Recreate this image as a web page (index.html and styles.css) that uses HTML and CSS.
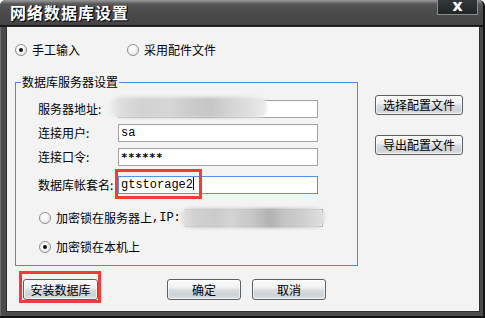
FILE: index.html
```html
<!DOCTYPE html>
<html lang="zh">
<head>
<meta charset="utf-8">
<title>网络数据库设置</title>
<link rel="stylesheet" href="styles.css">
</head>
<body>
<div class="window">
  <div class="titlebar">
    <span class="title">网络数据库设置</span>
    <span class="close">X</span>
  </div>
  <div class="client">
    <div class="mode-row">
      <label class="radio checked"><span class="dot"></span>手工输入</label>
      <label class="radio"><span class="dot"></span>采用配件文件</label>
    </div>
    <div class="main">
      <div class="group">
        <div class="legend">数据库服务器设置</div>
        <div class="field first"><span class="flabel">服务器地址:</span><span class="input"></span></div>
        <div class="field"><span class="flabel">连接用户:</span><span class="input">sa</span></div>
        <div class="field"><span class="flabel">连接口令:</span><span class="input pwd">******</span></div>
        <div class="field gap10"><span class="flabel">数据库帐套名:</span><span class="input focused">gtstorage2<span class="caret"></span></span></div>
        <div class="rfield first-r"><label class="radio"><span class="dot"></span>加密锁在服务器上<span class="mono">,IP:</span></label><span class="input ip"></span></div>
        <div class="rfield second-r"><label class="radio checked"><span class="dot"></span>加密锁在本机上</label></div>
      </div>
      <div class="side">
        <button class="btn side-btn">选择配置文件</button>
        <button class="btn side-btn">导出配置文件</button>
      </div>
    </div>
    <div class="footer">
      <button class="btn install">安装数据库</button>
      <button class="btn ok">确定</button>
      <button class="btn cancel">取消</button>
    </div>
    <div class="blur blur-addr"></div>
    <div class="blur blur-ip"></div>
    <div class="mark mark-name"></div>
    <div class="mark mark-install"></div>
  </div>
</div>
</body>
</html>
```
FILE: styles.css
```css
* { box-sizing: border-box; }
html, body { margin: 0; padding: 0; background: #ffffff; }
body {
  width: 485px;
  height: 318px;
  overflow: hidden;
  font-family: "Noto Sans CJK SC", "Liberation Sans", sans-serif;
  font-size: 12px;
  color: #000;
}
.window {
  width: 485px;
  height: 318px;
  background: #4b4b4b;
  border-right: 2px solid #141414;
  border-bottom: 2px solid #141414;
  border-radius: 6px 6px 0 0;
  box-shadow: inset 1px 0 0 #707070;
  overflow: hidden;
}
.titlebar {
  height: 27px;
  border-bottom: 2px solid #161616;
  background: linear-gradient(#9a9a9a 0px, #7a7a7a 2px, #565656 4px, #4b4b4b 12px, #444444 25px);
  display: flex;
  justify-content: space-between;
  align-items: flex-start;
}
.title {
  padding-left: 10px;
  line-height: 25px;
  font-size: 16px;
  font-weight: 700;
  letter-spacing: 1px;
  color: #ffffff;
  text-shadow: 1px 1px 0 #000, 1px 0 0 #000;
}
.close {
  width: 41px;
  height: 15px;
  margin-right: 5px;
  border: 1px solid #8c8c8c;
  border-top: none;
  background: linear-gradient(#34383a, #222526);
  color: #fff;
  font-family: "DejaVu Sans", sans-serif;
  font-weight: 700;
  font-size: 13px;
  line-height: 13px;
  text-align: center;
  text-shadow: 0 0 1px #ccc;
}
.client {
  position: relative;
  margin-left: 7px;
  width: 472px;
  height: 284px;
  background: #f3f3f3;
  box-shadow: 0 0 0 1px #2e2e2e;
}
.radio {
  display: flex;
  align-items: center;
  gap: 5px;
  line-height: 14px;
  white-space: nowrap;
}
.mono {
  font-family: "Liberation Mono", monospace;
  margin-left: -5px;
}
.dot {
  width: 12px;
  height: 12px;
  border-radius: 50%;
  border: 1px solid #8f8f8f;
  background: radial-gradient(circle at 40% 40%, #ffffff 0%, #f4f4f4 45%, #d8d8d8 100%);
  display: flex;
  align-items: center;
  justify-content: center;
}
.radio.checked .dot::after {
  content: "";
  width: 4px;
  height: 4px;
  border-radius: 50%;
  background: #111;
}
.mode-row {
  display: flex;
  gap: 47px;
  padding-top: 16px;
  padding-left: 8px;
  height: 30px;
}
.main {
  display: flex;
  margin-top: 25px;
  margin-left: 8px;
}
.group {
  width: 343px;
  height: 184px;
  border: 1px solid #3f8fe2;
  padding-left: 22px;
}
.legend {
  display: table;
  margin-top: -8px;
  margin-left: -17px;
  padding: 0 1px;
  line-height: 14px;
  background: #f3f3f3;
}
.field {
  display: flex;
  align-items: center;
  height: 18px;
  margin-top: 6px;
}
.field.first { margin-top: 11px; }
.field.gap10 { margin-top: 10px; }
.flabel {
  width: 80px;
  line-height: 14px;
  white-space: nowrap;
}
.input {
  position: relative;
  width: 200px;
  height: 18px;
  border: 1px solid #a3a3a3;
  background: #ffffff;
  padding-left: 2px;
  font-family: "Liberation Mono", "DejaVu Sans Mono", monospace;
  font-size: 12px;
  line-height: 16px;
}
.input.pwd {
  font-family: "DejaVu Sans Mono", monospace;
  font-weight: 700;
  font-size: 11px;
  letter-spacing: 0.4px;
  line-height: 18px;
}
.input.focused { border-color: #4f97e0; }
.caret {
  display: inline-block;
  width: 1px;
  height: 13px;
  background: #000;
  vertical-align: -2px;
}
.rfield {
  display: flex;
  align-items: center;
  height: 18px;
  margin-left: 1px;
}
.rfield.first-r { margin-top: 15px; }
.rfield.second-r { margin-top: 11px; }
.input.ip {
  width: 138px;
  margin-left: 4px;
}
.side {
  display: flex;
  flex-direction: column;
  gap: 20px;
  margin-left: 17px;
  margin-top: 13px;
}
.btn {
  font-family: "Noto Sans CJK SC", "Liberation Sans", sans-serif;
  font-size: 12px;
  color: #000;
  padding: 0;
  line-height: 14px;
  border: 1px solid #5c6165;
  border-radius: 3px;
  background: linear-gradient(#fbfbfb 0%, #f0f1f2 40%, #d9dde0 52%, #cdd2d6 80%, #dfe2e5 100%);
  box-shadow: inset 0 0 0 1px rgba(255,255,255,0.6);
}
.side-btn { width: 88px; height: 20px; }
.footer {
  display: flex;
  margin-top: 13px;
  padding-left: 16px;
}
.footer .btn { height: 21px; }
.install { width: 75px; }
.ok { width: 74px; margin-left: 69px; }
.cancel { width: 74px; margin-left: 11px; }
.blur {
  position: absolute;
  filter: blur(1.5px);
  border-radius: 9px;
}
.blur-addr {
  left: 103px;
  top: 70px;
  width: 157px;
  height: 21px;
  background: linear-gradient(90deg, #ececec 0%, #dcdcdc 8%, #d2d2d2 20%, #d6d6d6 38%, #cbcbcb 52%, #c6c6c6 64%, #d4d4d4 76%, #dedede 88%, #ececec 100%);
}
.blur-ip {
  left: 173px;
  top: 181px;
  width: 145px;
  height: 20px;
  background: linear-gradient(90deg, #e6e6e6 0%, #d0d0d0 10%, #cbcbcb 25%, #d4d4d4 35%, #c6c6c6 50%, #b2b2b2 62%, #c4c4c4 72%, #cfcfcf 85%, #e0e0e0 100%);
}
.mark {
  position: absolute;
  border: 3px solid #f23b3b;
}
.mark-name {
  left: 108px;
  top: 142px;
  width: 87px;
  height: 30px;
}
.mark-install {
  left: 12px;
  top: 244px;
  width: 82px;
  height: 32px;
}
```
